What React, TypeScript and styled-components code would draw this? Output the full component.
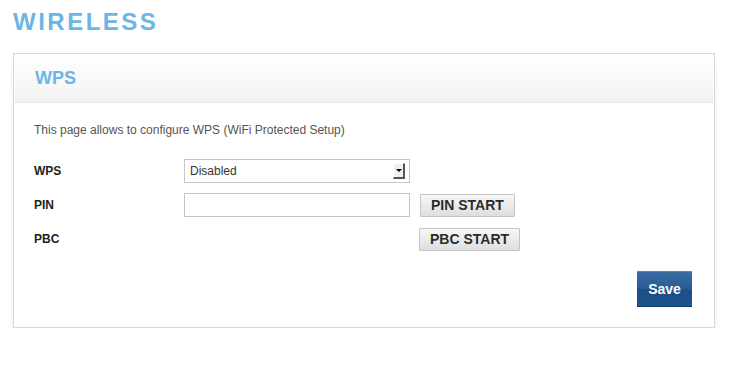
import styled, { createGlobalStyle } from "styled-components";

const GlobalStyle = createGlobalStyle`
    html, body {
        margin: 0;
        padding: 0;
        background: #ffffff;
        font-family: "Liberation Sans", Arial, sans-serif;
    }
`;

const Page = styled.div`
    padding: 10px 0 0 13px;
    width: 702px;
`;

const PageTitle = styled.h1`
    margin: 0 0 19px;
    font-size: 24px;
    line-height: 24px;
    font-weight: bold;
    letter-spacing: 2.5px;
    color: #6bb5e7;
`;

const Card = styled.section`
    border: 1px solid #dadada;
    padding: 1px;
    box-shadow: 0 8px 7px -4px rgba(0, 0, 0, 0.38);
`;

const CardHeader = styled.header`
    height: 47px;
    display: flex;
    align-items: center;
    padding-left: 20px;
    background: linear-gradient(#ffffff, #f3f3f3);
    border-bottom: 1px solid #e6e6e6;
`;

const CardTitle = styled.h2`
    margin: 0;
    font-size: 18px;
    font-weight: bold;
    color: #6bb5e7;
`;

const CardBody = styled.div`
    padding: 19px 21px 19px 19px;
    display: flex;
    flex-direction: column;
    background: #fff;
`;

const Intro = styled.p`
    margin: 0 0 21px;
    font-size: 12px;
    line-height: 16px;
    color: #555;
`;

const Row = styled.div`
    display: flex;
    align-items: center;
    height: 24px;
    margin-bottom: 10px;
`;

const Label = styled.label`
    width: 150px;
    font-size: 12px;
    font-weight: bold;
    color: #222;
`;

const Field = styled.div`
    width: 226px;
    height: 24px;
    box-sizing: border-box;
    border: 1px solid #c6c6c6;
    background: #fff;
    display: flex;
    align-items: center;
    padding: 0 4px 0 5px;
    font-size: 12px;
    color: #333;
`;

const FieldText = styled.span`
    flex: 1;
`;

const ArrowBox = styled.span`
    width: 12px;
    height: 16px;
    box-sizing: border-box;
    background: #f0f0f0;
    border-top: 1px solid #fff;
    border-left: 1px solid #fff;
    border-right: 2px solid #555;
    border-bottom: 2px solid #555;
    display: flex;
    align-items: center;
    justify-content: center;
    &::after {
        content: "";
        border-left: 3px solid transparent;
        border-right: 3px solid transparent;
        border-top: 3px solid #000;
    }
`;

const Spacer = styled.div<{ $w: number }>`
    width: ${(p) => p.$w}px;
`;

const GrayButton = styled.button<{ $gap: number }>`
    margin-left: ${(p) => p.$gap}px;
    height: 23px;
    padding: 0 10px;
    border: 1px solid #c4c4c4;
    border-radius: 1px;
    background: linear-gradient(#f7f7f7, #dedede);
    font-family: "Liberation Sans", Arial, sans-serif;
    font-size: 14px;
    font-weight: bold;
    color: #2b2b2b;
`;

const Footer = styled.div`
    display: flex;
    justify-content: flex-end;
    margin-top: 10px;
`;

const SaveButton = styled.button`
    width: 55px;
    height: 36px;
    border: none;
    border-top: 1px solid #5a86b5;
    border-bottom: 1px solid #123d6b;
    background: linear-gradient(#3a6ca2 0%, #2a5d95 48%, #1b4f88 52%, #1e528b 100%);
    font-family: "Liberation Sans", Arial, sans-serif;
    font-size: 14px;
    font-weight: bold;
    color: #fff;
`;

const App = () => {
    return (
        <>
            <GlobalStyle />
            <Page>
                <PageTitle>WIRELESS</PageTitle>
                <Card>
                    <CardHeader>
                        <CardTitle>WPS</CardTitle>
                    </CardHeader>
                    <CardBody>
                        <Intro>This page allows to configure WPS (WiFi Protected Setup)</Intro>
                        <Row>
                            <Label>WPS</Label>
                            <Field>
                                <FieldText>Disabled</FieldText>
                                <ArrowBox />
                            </Field>
                        </Row>
                        <Row>
                            <Label>PIN</Label>
                            <Field />
                            <GrayButton $gap={10}>PIN START</GrayButton>
                        </Row>
                        <Row>
                            <Label>PBC</Label>
                            <Spacer $w={226} />
                            <GrayButton $gap={9}>PBC START</GrayButton>
                        </Row>
                        <Footer>
                            <SaveButton>Save</SaveButton>
                        </Footer>
                    </CardBody>
                </Card>
            </Page>
        </>
    );
};

export default App;
